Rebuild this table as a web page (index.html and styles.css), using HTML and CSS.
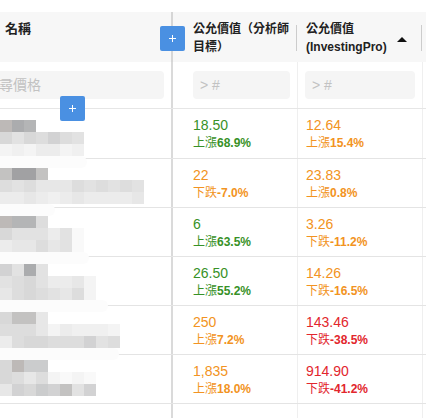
FILE: index.html
```html
<!DOCTYPE html>
<html lang="zh-Hant">
<head>
<meta charset="utf-8">
<title>公允價值</title>
<link rel="stylesheet" href="styles.css">
</head>
<body>
<div class="page">
  <div class="table">
    <div class="row head">
      <div class="cell name">名稱</div>
      <div class="cell c2">公允價值（分析師<br>目標）</div>
      <div class="cell c3"><span>公允價值<br>(InvestingPro)</span><span class="arrow"></span></div>
      <div class="cell c4"></div>
    </div>
    <div class="row filter">
      <div class="cell name"><input class="box" placeholder="搜尋價格"></div>
      <div class="cell c2"><input class="box" placeholder="&gt; #"></div>
      <div class="cell c3"><input class="box" placeholder="&gt; #"></div>
      <div class="cell c4"></div>
    </div>
    <div class="row data first">
      <div class="cell name"></div>
      <div class="cell c2 up"><div class="val">18.50</div><div class="chg">上漲<b>68.9%</b></div></div>
      <div class="cell c3 warn"><div class="val">12.64</div><div class="chg">上漲<b>15.4%</b></div></div>
      <div class="cell c4"></div>
    </div>
    <div class="row data">
      <div class="cell name"></div>
      <div class="cell c2 warn"><div class="val">22</div><div class="chg">下跌<b>-7.0%</b></div></div>
      <div class="cell c3 warn"><div class="val">23.83</div><div class="chg">上漲<b>0.8%</b></div></div>
      <div class="cell c4"></div>
    </div>
    <div class="row data">
      <div class="cell name"></div>
      <div class="cell c2 up"><div class="val">6</div><div class="chg">上漲<b>63.5%</b></div></div>
      <div class="cell c3 warn"><div class="val">3.26</div><div class="chg">下跌<b>-11.2%</b></div></div>
      <div class="cell c4"></div>
    </div>
    <div class="row data">
      <div class="cell name"></div>
      <div class="cell c2 up"><div class="val">26.50</div><div class="chg">上漲<b>55.2%</b></div></div>
      <div class="cell c3 warn"><div class="val">14.26</div><div class="chg">下跌<b>-16.5%</b></div></div>
      <div class="cell c4"></div>
    </div>
    <div class="row data">
      <div class="cell name"></div>
      <div class="cell c2 warn"><div class="val">250</div><div class="chg">上漲<b>7.2%</b></div></div>
      <div class="cell c3 dn"><div class="val">143.46</div><div class="chg">下跌<b>-38.5%</b></div></div>
      <div class="cell c4"></div>
    </div>
    <div class="row data">
      <div class="cell name"></div>
      <div class="cell c2 warn"><div class="val">1,835</div><div class="chg">上漲<b>18.0%</b></div></div>
      <div class="cell c3 dn"><div class="val">914.90</div><div class="chg">下跌<b>-41.2%</b></div></div>
      <div class="cell c4"></div>
    </div>
    <div class="row data">
      <div class="cell name"></div>
      <div class="cell c2"></div>
      <div class="cell c3"></div>
      <div class="cell c4"></div>
    </div>
  </div>

  <div class="censor">
    <div class="mgroup">
      <div class="mrow"><i class="k4"></i><i class="k2"></i><i class="k3"></i></div>
      <div class="mrow"><i class="k8"></i><i class="k10"></i><i class="k8"></i><i class="k9"></i><i class="k7"></i><i class="k9"></i><i class="k10"></i></div>
      <div class="mrow"><i class="k14"></i><i class="k13"></i><i class="k14"></i><i class="k12"></i><i class="k12"></i><i class="k14"></i><i class="k13"></i></div>
      <div class="fog f1"></div>
    </div>
    <div class="mgroup">
      <div class="mrow"><i class="k5"></i><i class="k1"></i><i class="k1"></i><i class="k5"></i></div>
      <div class="mrow"><i class="k9"></i><i class="k10"></i><i class="k9"></i><i class="k11"></i><i class="k11"></i><i class="k11"></i><i class="k9"></i><i class="k10"></i><i class="k9"></i><i class="k10"></i><i class="k9"></i><i class="k10"></i></div>
      <div class="mrow"><i class="k12"></i><i class="k12"></i><i class="k11"></i><i class="k12"></i><i class="k13"></i><i class="k12"></i><i class="k11"></i><i class="k12"></i><i class="k12"></i><i class="k12"></i><i class="k12"></i><i class="k11"></i></div>
      <div class="fog f2"></div>
    </div>
    <div class="mgroup">
      <div class="mrow"><i class="k4"></i><i class="k3"></i><i class="k3"></i><i class="k9"></i></div>
      <div class="mrow"><i class="k8"></i><i class="k10"></i><i class="k10"></i><i class="k10"></i><i class="k12"></i><i class="k10"></i><i class="k15"></i></div>
      <div class="mrow"><i class="k12"></i><i class="k11"></i><i class="k11"></i><i class="k9"></i><i class="k11"></i><i class="k10"></i><i class="k15"></i></div>
      <div class="fog f3"></div>
    </div>
    <div class="mgroup">
      <div class="mrow"><i class="k7"></i><i class="k10"></i><i class="k2"></i><i class="k10"></i></div>
      <div class="mrow"><i class="k10"></i><i class="k9"></i><i class="k8"></i><i class="k10"></i><i class="k12"></i><i class="k12"></i><i class="k11"></i><i class="k14"></i></div>
      <div class="mrow"><i class="k11"></i><i class="k9"></i><i class="k8"></i><i class="k9"></i><i class="k10"></i><i class="k11"></i><i class="k9"></i><i class="k14"></i></div>
      <div class="fog f4"></div>
    </div>
    <div class="mgroup">
      <div class="mrow"><i class="k8"></i><i class="k5"></i><i class="k5"></i><i class="k11"></i></div>
      <div class="mrow"><i class="k9"></i><i class="k9"></i><i class="k9"></i><i class="k11"></i><i class="k14"></i><i class="k12"></i><i class="k13"></i><i class="k13"></i><i class="k13"></i><i class="k14"></i></div>
      <div class="mrow"><i class="k12"></i><i class="k9"></i><i class="k8"></i><i class="k8"></i><i class="k9"></i><i class="k9"></i><i class="k9"></i><i class="k7"></i><i class="k10"></i><i class="k9"></i></div>
      <div class="fog f5"></div>
    </div>
    <div class="mgroup">
      <div class="mrow"><i class="k8"></i><i class="k4"></i><i class="k6"></i><i class="k6"></i></div>
      <div class="mrow"><i class="k8"></i><i class="k9"></i><i class="k11"></i><i class="k9"></i><i class="k14"></i><i class="k15"></i><i class="k14"></i><i class="k15"></i></div>
      <div class="mrow"><i class="k11"></i><i class="k7"></i><i class="k8"></i><i class="k6"></i><i class="k7"></i><i class="k5"></i><i class="k10"></i><i class="k7"></i></div>
    </div>
  </div>

  <div class="addbtn add-head"><svg width="7" height="7" viewBox="0 0 7 7"><path d="M3.5 0V7M0 3.5H7" stroke="#fff" stroke-width="1" fill="none"/></svg></div>
  <div class="addbtn add-row"><svg width="7" height="7" viewBox="0 0 7 7"><path d="M3.5 0V7M0 3.5H7" stroke="#fff" stroke-width="1" fill="none"/></svg></div>
</div>
</body>
</html>
```
FILE: styles.css
```css
* { box-sizing: border-box; }

body {
  margin: 0;
  background: #fff;
  color: #222;
  font-family: "Liberation Sans", Arial, "Noto Sans CJK TC", sans-serif;
}

.page {
  position: relative;
  width: 426px;
  height: 418px;
  overflow: hidden;
  padding-top: 12px;
}

.table {
  margin-left: -30px;
  width: 470px;
}

.row {
  display: grid;
  grid-template-columns: 203px 125px 125px 1fr;
}

.cell { border-right: 1px solid #efefef; }
.cell.name { border-right: 2px solid #dadada; }
.cell.c4 { border-right: none; }

/* header */
.head {
  height: 50px;
  background: #f7f7f7;
}
.head .cell {
  border-right-color: transparent;
  padding-top: 8px;
  font-size: 12px;
  font-weight: 700;
  line-height: 18px;
  color: #222;
}
.head .cell.name {
  border-right: 2px solid #d6d6d6;
  padding-left: 35px;
  font-size: 13px;
}
.head .c2 {
  padding-left: 20px;
  background: linear-gradient(#cccccc, #cccccc) right 0 top 13px / 1px 26px no-repeat;
}
.head .c3 {
  display: flex;
  padding-left: 8px;
  padding-right: 15px;
  background: linear-gradient(#cccccc, #cccccc) right 0 top 13px / 1px 26px no-repeat;
}
.arrow {
  margin-left: auto;
  margin-top: 17px;
  width: 0;
  height: 0;
  border-left: 5px solid transparent;
  border-right: 5px solid transparent;
  border-bottom: 5px solid #111;
}

/* filter row */
.filter {
  height: 47px;
  border-bottom: 1px solid #e6e6e6;
}
.filter .cell {
  padding: 9px 7px 0 7px;
}
.filter .cell.c2 { padding-left: 20px; }
.filter .cell.c4 { padding: 0; }
.box {
  display: block;
  width: 100%;
  height: 28px;
  border: none;
  border-radius: 4px;
  background: #f5f5f5;
  padding: 0 0 0 7px;
  font-family: "Liberation Sans", Arial, "Noto Sans CJK TC", sans-serif;
  font-size: 14px;
  color: #333;
  outline: none;
}
.name .box { padding-left: 8px; }
.box::placeholder { color: #c2c2c2; }

/* data rows */
.data {
  height: 49px;
  border-bottom: 1px solid #e4e4e4;
}
.data.first { height: 50px; }
.data .c2, .data .c3 {
  display: flex;
  flex-direction: column;
  justify-content: center;
}
.data .c2 { padding-left: 20px; }
.data .c3 { padding-left: 8px; }

.val {
  font-size: 14px;
  line-height: 19px;
}
.chg {
  font-size: 12px;
  line-height: 16px;
}
.chg b { font-weight: 700; }

.up { color: #379127; }
.warn { color: #f29322; }
.dn { color: #e2262d; }

/* censored name mosaic overlay */
.censor {
  position: absolute;
  left: 0;
  top: 120px;
  display: flex;
  flex-direction: column;
}
.mgroup {
  height: 48px;
  display: flex;
  flex-direction: column;
}
.mrow {
  display: flex;
  height: 12px;
}
.mrow i {
  display: block;
  width: 12px;
  height: 12px;
}
.fog {
  height: 12px;
  background: #fcfcfc;
  border-radius: 0 6px 6px 0;
}
.f1 { width: 87px; }
.f2 { width: 55px; }
.f3 { width: 89px; }
.f4 { width: 108px; }
.f5 { width: 119px; }

.k1 { background: #a1a1a3; }
.k2 { background: #abacae; }
.k3 { background: #b4b5b6; }
.k4 { background: #bdb9b7; }
.k5 { background: #c3c2c1; }
.k6 { background: #cbcccd; }
.k7 { background: #d2d2d3; }
.k8 { background: #d8d8d8; }
.k9 { background: #dddddd; }
.k10 { background: #e2e2e2; }
.k11 { background: #e7e7e7; }
.k12 { background: #ececec; }
.k13 { background: #f0f0f0; }
.k14 { background: #f4f4f4; }
.k15 { background: #f9f9f9; }

/* add-column buttons */
.addbtn {
  position: absolute;
  width: 25px;
  height: 25px;
  background: #4a90e2;
  border-radius: 2px;
  display: flex;
  align-items: center;
  justify-content: center;
}
.addbtn svg { display: block; }
.add-head { left: 160px; top: 26px; }
.add-row { left: 60px; top: 96px; }
```
